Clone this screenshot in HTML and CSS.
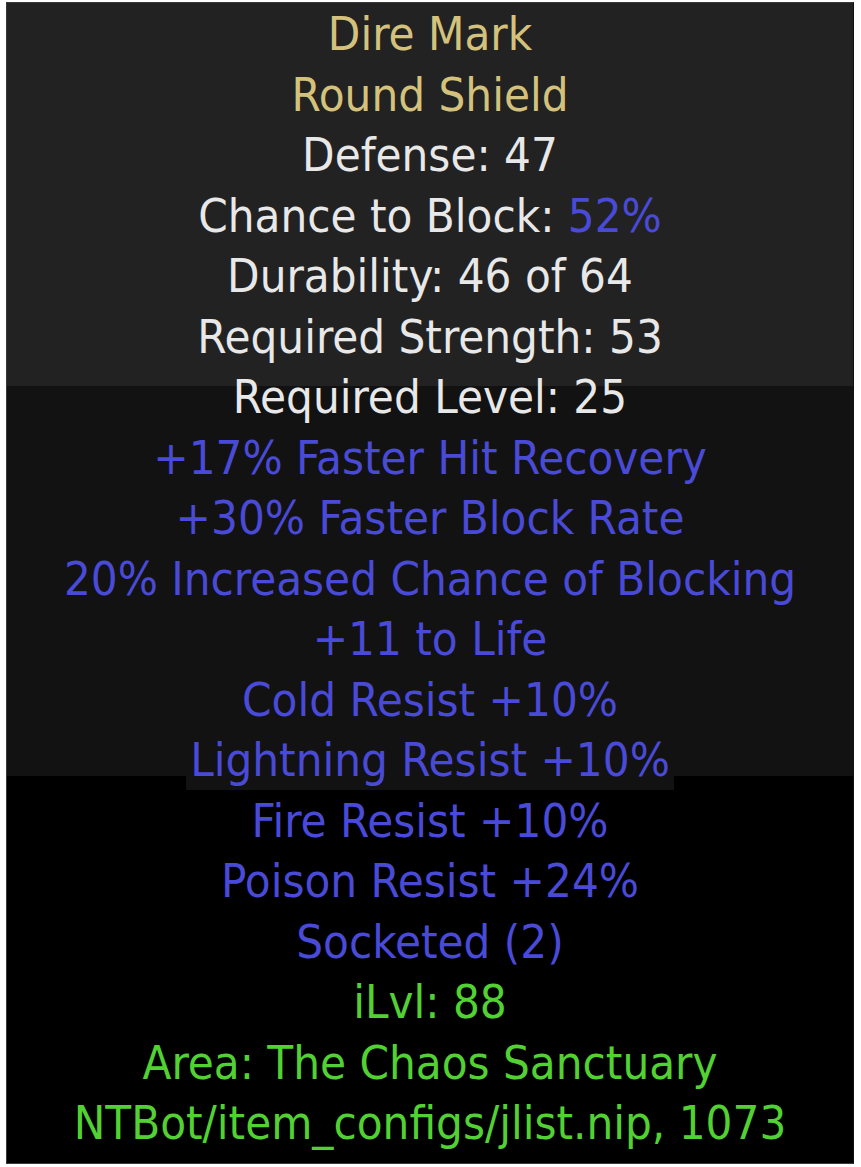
FILE: index.html
```html
<!DOCTYPE html>
<html lang="en">
   <head>
      <meta charset="UTF-8">
      <meta name="viewport" content="width=device-width, initial-scale=1.0">
      <title>Item Tooltip</title>
      <link rel="stylesheet" href="styles.css">
   </head>
   <body>
      <div class="tooltip">
         <div class="line unique">Dire Mark</div>
         <div class="line unique">Round Shield</div>
         <div class="line">Defense: 47</div>
         <div class="line">Chance to Block: <span class="magic">52%</span></div>
         <div class="line">Durability: 46 of 64</div>
         <div class="line">Required Strength: 53</div>
         <div class="line">Required Level: 25</div>
         <div class="line magic">+17% Faster Hit Recovery</div>
         <div class="line magic">+30% Faster Block Rate</div>
         <div class="line magic">20% Increased Chance of Blocking</div>
         <div class="line magic">+11 to Life</div>
         <div class="line magic">Cold Resist +10%</div>
         <div class="line magic"><span class="shade">Lightning Resist +10%</span></div>
         <div class="line magic">Fire Resist +10%</div>
         <div class="line magic">Poison Resist +24%</div>
         <div class="line magic">Socketed (2)</div>
         <div class="line info">iLvl: 88</div>
         <div class="line info">Area: The Chaos Sanctuary</div>
         <div class="line info">NTBot/item_configs/jlist.nip, 1073</div>
      </div>
   </body>
</html>
```

FILE: styles.css
```css
body {
    margin: 0;
    background: #fff;
}
/* Tooltip box */
.tooltip {
    width: 846px;
    height: 1159px;
    margin: 2px 0 0 6px;
    border: 1px solid #3a3a3a;
    border-right-color: #111;
    box-sizing: content-box;
    background: linear-gradient(#222 0, #222 383px, #121212 383px, #121212 773px, #000 773px);
    padding-top: 1px;
    font-family: "DejaVu Sans Condensed", "DejaVu Sans", sans-serif;
    font-size: 47px;
    line-height: 60.5px;
    text-align: center;
    color: #e8e8e8;
}
.line {
    white-space: nowrap;
}
.unique {
    color: #d4c27c;
}
.magic {
    color: #4a4ad8;
}
.info {
    color: #52d232;
}
.shade {
    background: #121212;
    padding: 0 4px 3px;
}
```
